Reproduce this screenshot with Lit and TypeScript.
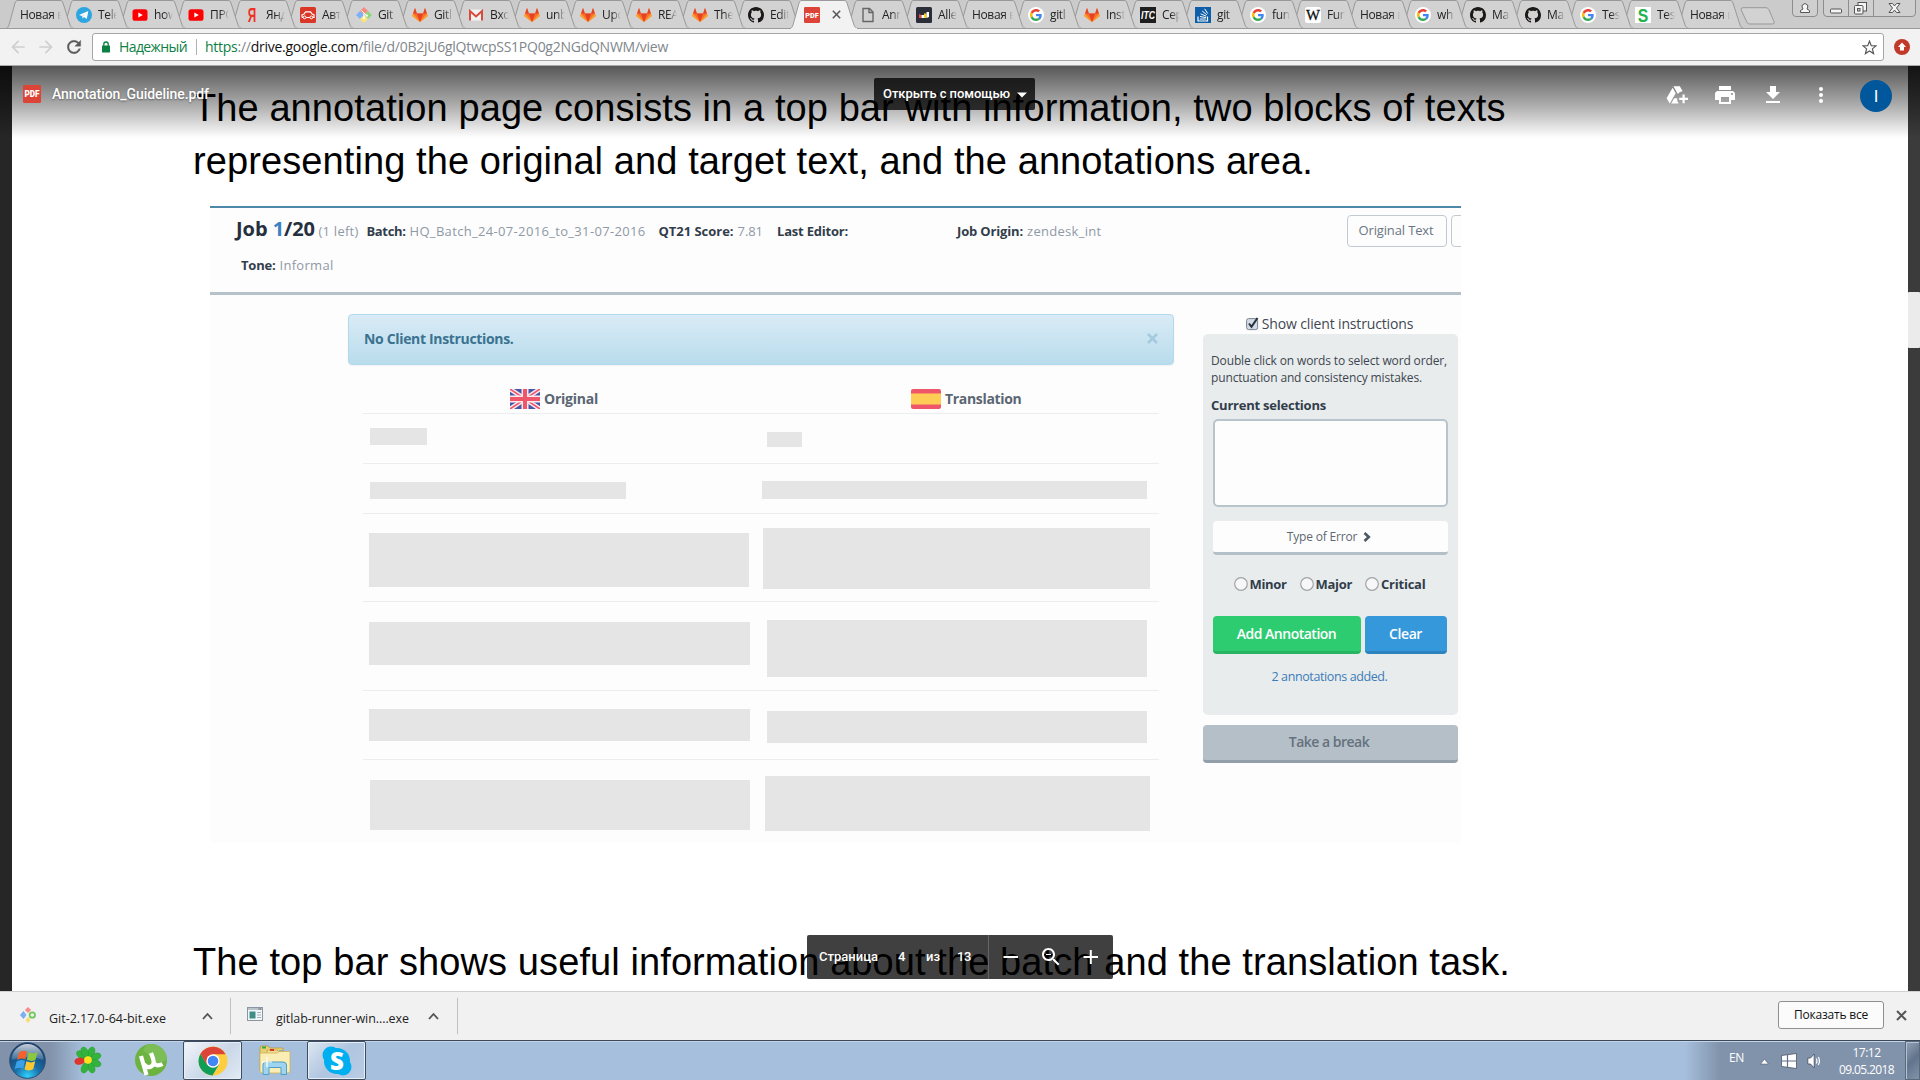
import { LitElement, html, svg, css } from "lit";
import { customElement, property } from "lit/decorators.js";
import { classMap } from "lit/directives/class-map.js";
import { styleMap } from "lit/directives/style-map.js";

/* A line of text tracked so that it fills a given width. */
@customElement("fit-text")
class FitText extends LitElement {
  @property({ type: Number }) w = 0;
  static styles = css`
    :host { display: inline-block; white-space: pre; flex: none; }
    .run { display: inline-block; }
  `;
  updated() {
    const run = this.renderRoot.querySelector(".run") as HTMLElement;
    run.style.letterSpacing = "0px";
    const count = (this.textContent || "").trim().length || 1;
    const gap = (this.w - run.getBoundingClientRect().width) / count;
    run.style.letterSpacing = gap.toFixed(3) + "px";
    this.style.width = this.w + "px";
  }
  render() {
    return html`<span class="run"><slot></slot></span>`;
  }
}

const icon = (w: number, h: number, box: string, body: unknown) =>
  html`<svg width=${w} height=${h} viewBox=${box} style="display:block;flex:none">${body}</svg>`;

const octocat =
  "M8 0C3.58 0 0 3.58 0 8c0 3.54 2.29 6.53 5.47 7.59.4.07.55-.17.55-.38 0-.19-.01-.82-.01-1.49-2.01.37-2.53-.49-2.69-.94-.09-.23-.48-.94-.82-1.13-.28-.15-.68-.52-.01-.53.63-.01 1.08.58 1.23.82.72 1.21 1.87.87 2.33.66.07-.52.28-.87.51-1.07-1.78-.2-3.64-.89-3.64-3.95 0-.87.31-1.59.82-2.15-.08-.2-.36-1.02.08-2.12 0 0 .67-.21 2.2.82.64-.18 1.32-.27 2-.27.68 0 1.36.09 2 .27 1.53-1.04 2.2-.82 2.2-.82.44 1.1.16 1.92.08 2.12.51.56.82 1.27.82 2.15 0 3.07-1.87 3.75-3.65 3.95.29.25.54.73.54 1.48 0 1.07-.01 1.93-.01 2.2 0 .21.15.46.55.38A8.013 8.013 0 0016 8c0-4.42-3.58-8-8-8z";

const fav: Record<string, unknown> = {
  telegram: svg`<circle cx="8" cy="8" r="8" fill="#2ca5e0"/><path d="M3 8 L12.3 4 L10.8 12 L8 10 L6.6 11.5 L6.2 9Z" fill="#fff"/><path d="M6.2 9 L10.3 5.8 L7.2 9.6 L6.6 11.5Z" fill="#c8daea"/>`,
  youtube: svg`<rect x="0.5" y="2.2" width="15" height="11.6" rx="2.6" fill="#f00"/><path d="M6.3 5.4 L10.8 8 L6.3 10.6Z" fill="#fff"/>`,
  yandex: svg`<text x="8" y="15" font-family="Liberation Sans" font-size="20" textLength="8.5" lengthAdjust="spacingAndGlyphs" font-weight="bold" text-anchor="middle" fill="#ef3124">Я</text>`,
  car: svg`<rect width="16" height="16" rx="1.5" fill="#db3727"/><path d="M2 10.5 V7.8 L4 7 L5.6 4.8 H10.5 L12.2 7 L14 7.8 V10.5 H12.8 M9.8 10.5 H6.2 M3.2 10.5 H2" fill="none" stroke="#fff" stroke-width="1.2"/><circle cx="4.6" cy="10.4" r="1.4" fill="none" stroke="#fff"/><circle cx="11.3" cy="10.4" r="1.4" fill="none" stroke="#fff"/>`,
  git: svg`<path d="M8 0 L12 4 L8 8 L4 4Z" fill="#f98a7e"/><path d="M4 4 L8 8 L4 12 L0 8Z" fill="#7cb0f8"/><path d="M12 4 L16 8 L12 12 L8 8Z" fill="#8fd67a"/><path d="M8 8 L12 12 L8 16 L4 12Z" fill="#fbe377"/><path d="M5.5 3.5 L8 6 V11 M8 6 L10.5 8.5" stroke="#fff" stroke-width="1" fill="none"/><circle cx="8" cy="11" r="1.2" fill="#fff"/><circle cx="10.8" cy="8.6" r="1.2" fill="#fff"/>`,
  gitlab: svg`<path d="M8 15 L0.3 9 L2 3.6 L3 1 L4.9 6.4 H11.1 L13 1 L14 3.6 L15.7 9Z" fill="#fc6d26"/><path d="M8 15 L4.9 6.4 H11.1Z" fill="#e24329"/><path d="M0.3 9 L1.2 6.4 L8 15Z M15.7 9 L14.8 6.4 L8 15Z" fill="#fca326"/><path d="M3 1 L4.9 6.4 H1.2Z M13 1 L11.1 6.4 H14.8Z" fill="#e24329"/>`,
  gmail: svg`<rect x="1" y="2.5" width="14" height="11" rx="1" fill="#f2f2f2"/><path d="M2 13.5 V4 L8 9.5 L14 4 V13.5" fill="none" stroke="#d54b3d" stroke-width="2"/>`,
  github: svg`<path d=${octocat} fill="#1b1817"/>`,
  pdf: svg`<rect width="16" height="16" rx="1.2" fill="#db4437"/><text x="8" y="11" font-family="Roboto" font-weight="900" font-size="7.5" text-anchor="middle" textLength="13.4" lengthAdjust="spacingAndGlyphs" fill="#fff">PDF</text>`,
  file: svg`<path d="M3 1.5 H9.5 L13 5 V14.5 H3Z M9 1.5 V5.5 H13" fill="none" stroke="#666" stroke-width="1.4"/>`,
  allegro: svg`<rect width="16" height="16" rx="1.5" fill="#2b2d39"/><path d="M3 7 L5.500 8 V11 H3Z" fill="#ef4a4a"/><path d="M5.500 8 H8 V11 H5.5Z" fill="#fff"/><path d="M8 6.500 H10.5 V11 H8Z" fill="#f7d423"/><path d="M10.5 5 L13 5 V10 L10.5 11Z" fill="#fff"/>`,
  google: svg`<circle cx="8" cy="8" r="8" fill="#fff"/><g transform="translate(2 2) scale(.25)"><path fill="#EA4335" d="M24 9.5c3.54 0 6.71 1.22 9.21 3.6l6.85-6.85C35.9 2.38 30.47 0 24 0 14.62 0 6.51 5.38 2.56 13.22l7.98 6.19C12.43 13.72 17.74 9.5 24 9.5z"/><path fill="#4285F4" d="M46.98 24.55c0-1.57-.15-3.09-.38-4.55H24v9.02h12.94c-.58 2.96-2.26 5.48-4.78 7.18l7.73 6c4.51-4.18 7.09-10.36 7.09-17.65z"/><path fill="#FBBC05" d="M10.53 28.59c-.48-1.45-.76-2.99-.76-4.59s.27-3.14.76-4.59l-7.98-6.19C.92 16.46 0 20.12 0 24c0 3.88.92 7.54 2.56 10.78l7.97-6.19z"/><path fill="#34A853" d="M24 48c6.48 0 11.93-2.13 15.89-5.81l-7.73-6c-2.15 1.45-4.92 2.3-8.16 2.3-6.26 0-11.57-4.22-13.47-9.91l-7.98 6.19C6.51 42.62 14.62 48 24 48z"/></g>`,
  itc: svg`<rect width="16" height="16" fill="#1e1e1e"/><text x="8" y="11.8" font-family="Liberation Sans" font-weight="bold" font-style="italic" font-size="10.5" text-anchor="middle" textLength="14" lengthAdjust="spacingAndGlyphs" fill="#fff">ITC</text>`,
  stack: svg`<rect width="16" height="16" fill="#0f5ea8"/><path d="M3 9.5 V14 H12.5 V9.5" fill="none" stroke="#fff" stroke-width="1.2"/><path d="M4.8 12 H10.8 M5 9.5 L11 10.6 M5.6 6.8 L11.2 9.2 M7.2 4 L11.8 7.8 M9.6 1.8 L12.8 6.6" stroke="#fff" stroke-width="1"/>`,
  wiki: svg`<rect width="16" height="16" rx="2.5" fill="#fff"/><text x="8" y="13" font-family="Liberation Serif" font-size="15" text-anchor="middle" textLength="14" lengthAdjust="spacingAndGlyphs" fill="#111" stroke="#111" stroke-width=".3">W</text>`,
  s: svg`<rect width="16" height="16" fill="#fff"/><text x="8" y="14.5" font-family="Liberation Sans" font-weight="bold" font-size="18.5" text-anchor="middle" textLength="10.5" lengthAdjust="spacingAndGlyphs" fill="#22b14c">S</text>`,
};

type Tab = [string, string];
const tabs: Tab[] = [
  ["", "Новая в"], ["telegram", "Tele"], ["youtube", "how"], ["youtube", "ПРО"], ["yandex", "Янд"],
  ["car", "Авт"], ["git", "Git"], ["gitlab", "Gitl"], ["gmail", "Вхо"], ["gitlab", "unb"],
  ["gitlab", "Upd"], ["gitlab", "REA"], ["gitlab", "The"], ["github", "Edit"], ["pdf", ""],
  ["file", "Ann"], ["allegro", "Alle"], ["", "Новая в"], ["google", "gitl"], ["gitlab", "Inst"],
  ["itc", "Сер"], ["stack", "git"], ["google", "fun"], ["wiki", "Fun"], ["", "Новая в"],
  ["google", "wh"], ["github", "Ma"], ["github", "Ma"], ["google", "Tes"], ["s", "Tes"], ["", "Новая в"],
];

@customElement("browser-tabs")
class BrowserTabs extends LitElement {
  static styles = css`
    :host { display: flex; height: 29px; background: #cbcbcb; padding-left: 6px; box-sizing: border-box;
      border-bottom: 1px solid #9b9b9b; font: 12px/16px "Open Sans", "Noto Sans", sans-serif; color: #222; }
    .tab { position: relative; flex: none; width: 56px; height: 28px; }
    .tab.narrow { width: 55px; }
    .shape { position: absolute; left: 0; top: 0; }
    .content { position: relative; display: flex; gap: 6px; padding: 7px 0 0 14px; height: 17px; }
    .label { flex: 1; min-width: 0; margin-right: 1px; overflow: hidden; white-space: nowrap; letter-spacing: -.35px;
      -webkit-mask-image: linear-gradient(90deg, #000 calc(100% - 9px), transparent); }
    .close { margin-left: 6px; padding-top: 3px; }
    .add { margin: 7px 0 0 9px; }
    .user { margin: -1px 0 0 16px; }
    .controls { margin: -1px 0 0 5px; }
  `;
  render() {
    return html`
      ${tabs.map(([name, text], i) => {
        const active = name === "pdf";
        return html`
          <div class=${classMap({ tab: true, narrow: i > 19 })} style=${styleMap({ zIndex: String(active ? 60 : 50 - i) })}>
            <svg class="shape" width="70" height="29" viewBox="0 0 70 29">
              <path d="M0 28.5 C2 28 2 27 3 25 L9 3 C10 1 10 .5 12 .5 H54 C56 .5 56.5 1.5 57 3 L64 25 C65 27.5 66 28 68 28.5"
                fill=${active ? "#f2f2f2" : "#d2d2d2"} stroke=${active ? "#9b9b9b" : "#999"}></path>
              ${active ? svg`<path d="M1 28.5 H67" stroke="#f2f2f2"/>` : svg`<path d="M0 28.5 H70" stroke="#9b9b9b"/>`}
            </svg>
            <div class="content">
              ${name ? icon(16, 16, "0 0 16 16", fav[name]) : ""}
              ${active
                ? html`<div class="close">${icon(9, 9, "0 0 9 9", svg`<path d="M.8 .8 L8.2 8.2 M8.2 .8 L.8 8.2" stroke="#555" stroke-width="1.5"/>`)}</div>`
                : html`<span class="label">${text}</span>`}
            </div>
          </div>`;
      })}
      <div class="add">${icon(36, 18, "0 0 36 18", svg`<path d="M3 .7 H26 Q28 .7 28.8 2.5 L34 14.5 Q34.8 17 32.5 17 H9.5 Q7.5 17 6.8 15 L1.2 3 Q.5 .7 3 .7Z" fill="#d2d2d2" stroke="#999"/>`)}</div>
      <div class="user">${icon(26, 18, "0 0 26 18", svg`<path d="M.5 0 V14 Q.5 17.5 4 17.5 H22 Q25.500 17.5 25.500 14 V0" fill="#cfcfcf" stroke="#8d8d8d"/><path d="M8.500 13.500 V11.500 L11 10 Q9.500 8 10.300 6 Q13 3 15.600 6 Q16.300 8 15 10 L17.500 11.500 V13.500Z" fill="#f5f5f5" stroke="#555"/>`)}</div>
      <div class="controls">${icon(93, 18, "0 0 93 18", svg`<path d="M.5 0 V14 Q.5 17.5 4 17.5 H89 Q92.500 17.5 92.500 14 V0 M25.500 0 V17.500 M50.500 0 V17.500" fill="#cfcfcf" stroke="#8d8d8d"/>
        <rect x="7.500" y="10" width="11" height="4" rx="1" fill="#f5f5f5" stroke="#555"/>
        <rect x="35" y="3.500" width="8.500" height="8.500" fill="#f5f5f5" stroke="#555"/><rect x="31.500" y="6.500" width="8.500" height="8.500" rx="1" fill="#f5f5f5" stroke="#555"/><rect x="34.500" y="9.500" width="2.500" height="2.500" fill="#cfcfcf" stroke="#555"/>
        <path d="M66 4.500 H69.500 L71.500 7 L73.500 4.500 H77 L73.500 9 L77 13.500 H73.500 L71.500 11 L69.500 13.500 H66 L69.500 9Z" fill="#f5f5f5" stroke="#555"/>`)}</div>
    `;
  }
}

@customElement("address-bar")
class AddressBar extends LitElement {
  static styles = css`
    :host { display: flex; align-items: center; height: 37px; box-sizing: border-box; background: #f2f2f2; padding: 0 10px 0 8px;
      border-bottom: 1px solid #a9a9a9; font: 14px/20px "Open Sans", "Noto Sans", sans-serif; }
    .nav { display: flex; gap: 8px; align-items: center; width: 84px; }
    .box { flex: 1; display: flex; align-items: center; height: 28px; box-sizing: border-box; border: 1px solid #a5a5a5; border-radius: 3px; background: #fff; padding: 0 6px 0 8px; }
    .secure { color: #0b8043; margin-left: 8px; }
    .bar { width: 1px; height: 16px; background: #b0b0b0; margin: 0 8px 0 9px; }
    .url { color: #80868b; }
    .https { color: #0b8043; }
    .host { color: #111; }
    .star { margin-left: auto; }
    .ext { margin-left: 10px; }
  `;
  render() {
    return html`
      <div class="nav">
        ${icon(20, 20, "0 0 24 24", svg`<path fill="#cfcfcf" d="M20 11H7.830l5.590-5.590L12 4l-8 8 8 8 1.410-1.410L7.830 13H20v-2z"/>`)}
        ${icon(20, 20, "0 0 24 24", svg`<path fill="#cfcfcf" d="M12 4l-1.410 1.410L16.170 11H4v2h12.170l-5.580 5.590L12 20l8-8z"/>`)}
        ${icon(20, 20, "0 0 24 24", svg`<path fill="#5a5a5a" stroke="#5a5a5a" stroke-width=".4" d="M17.650 6.350C16.200 4.900 14.210 4 12 4c-4.420 0-7.990 3.580-7.990 8s3.570 8 7.990 8c3.730 0 6.840-2.550 7.730-6h-2.080c-.820 2.330-3.040 4-5.650 4-3.310 0-6-2.690-6-6s2.690-6 6-6c1.660 0 3.140.690 4.220 1.780L13 11h7V4l-2.350 2.350z"/>`)}
      </div>
      <div class="box">
        ${icon(10, 12, "0 0 10 12", svg`<rect x="1" y="4.500" width="8" height="7" rx=".6" fill="#0b8043"/><path d="M2.800 5 V3.200 Q2.800 1 5 1 Q7.200 1 7.200 3.200 V5" fill="none" stroke="#0b8043" stroke-width="1.300"/>`)}
        <fit-text class="secure" w="68">Надежный</fit-text>
        <span class="bar"></span>
        <fit-text class="url" w="463"><span class="https">https</span>://<span class="host">drive.google.com</span>/file/d/0B2jU6glQtwcpSS1PQ0g2NGdQNWM/view</fit-text>
        <span class="star">${icon(15, 15, "0 0 15 15", svg`<path d="M7.500 1.200 L9.300 5.700 L14 5.900 L10.400 8.900 L11.600 13.600 L7.500 11 L3.400 13.600 L4.600 8.900 L1 5.900 L5.700 5.700Z" fill="none" stroke="#5a5a5a" stroke-width="1.200"/>`)}</span>
      </div>
      <span class="ext">${icon(16, 16, "0 0 16 16", svg`<circle cx="8" cy="8" r="8" fill="#c0392b"/><path d="M8 3.500 L12 8 H10 V11.500 H6 V8 H4Z" fill="#fff"/>`)}</span>
    `;
  }
}

/* [left margin, top margin, width, height] of a placeholder block */
type Block = [number, number, number, number];
const rows: { h: number; a: Block; b: Block }[] = [
  { h: 50, a: [7, 14, 57, 17], b: [340, 18, 35, 15] },
  { h: 50, a: [7, 18, 256, 17], b: [136, 17, 385, 18] },
  { h: 88, a: [6, 19, 380, 54], b: [14, 14, 387, 61] },
  { h: 89, a: [6, 20, 381, 43], b: [17, 18, 380, 57] },
  { h: 69, a: [6, 18, 381, 32], b: [17, 20, 380, 32] },
  { h: 85, a: [7, 20, 380, 50], b: [15, 16, 385, 55] },
];
const block = ([x, y, w, h]: Block) =>
  html`<div class="block" style=${styleMap({ margin: `${y}px 0 0 ${x}px`, width: w + "px", height: h + "px" })}></div>`;

@customElement("annotation-page")
class AnnotationPage extends LitElement {
  static styles = css`
    :host { display: block; width: 1251px; height: 637px; box-sizing: border-box; overflow: hidden; background: #fdfdfd; border-top: 2px solid #4d88a8;
      font: 13px/24px "Open Sans", "Noto Sans", sans-serif; color: #8f99a6; }
    .bold { font-weight: 700; color: #323d4b; }
    .head { height: 87px; box-sizing: border-box; border-bottom: 3px solid #b6c2c9; padding: 9px 0 0 26px; }
    .line { display: flex; align-items: baseline; height: 24px; }
    .job { font-size: 20px; color: #262f3e; font-weight: 700; }
    .job span { color: #3b82c4; }
    .left { margin-left: 3.500px; }
    .g1 { margin-left: 8px; } .g2 { margin-left: 4px; } .g3 { margin-left: 13px; } .g4 { margin-left: 14px; } .g5 { margin-left: 109px; }
    .btn { align-self: flex-start; box-sizing: border-box; height: 32px; margin-top: -2px; padding: 2px 0 0 11px; border: 1px solid #c0cad0; border-radius: 4px; flex: none; color: #6a7683; }
    .b1 { width: 100px; margin-left: 245px; } .b2 { width: 30px; margin-left: 4px; }
    .tone { margin: 12px 0 0 5px; }
    .body { display: flex; }
    .main { width: 826px; margin: 19px 0 0 138px; }
    .alert { display: flex; align-items: center; justify-content: space-between; height: 51px; box-sizing: border-box; padding: 0 15px 1px; border: 1px solid #b3daec; border-radius: 4px;
      background: linear-gradient(#d9ebf6, #b9dcec); font-size: 14px; font-weight: 700; color: #3a7290; box-shadow: 0 1px 2px rgba(0,0,0,.05); }
    .alert svg { margin-bottom: 2px; }
    .cols { display: flex; height: 48px; box-sizing: border-box; padding-top: 24px; font-size: 14px; line-height: 19px; font-weight: 700; color: #5a6673; }
    .cols svg { margin-right: 4px; }
    .o { display: flex; padding-left: 162px; width: 239px; }
    .t { display: flex; padding-left: 162px; }
    .table { margin: 0 15px 0 15px; }
    .row { display: flex; align-items: flex-start; box-sizing: border-box; border-top: 1px solid #ebeeee; }
    .block { flex: none; background: #e5e5e5; }
    .side { width: 255px; margin: 15px 0 0 28.500px; }
    .show { display: flex; align-items: center; justify-content: center; gap: 3px; height: 24px; padding-top: 3px; box-sizing: border-box; font-size: 14px; color: #3f4752; margin-left: -1px; }
    .panel { box-sizing: border-box; height: 381px; border-radius: 5px; background: #e8ecec; padding: 19px 10px 0 9px; color: #3d4650; }
    .hint { font-size: 12px; line-height: 16.500px; display: flex; flex-direction: column; margin-left: -.5px; }
    .cur { display: block; line-height: 20px; margin-top: 9px; margin-left: -.5px; }
    .area { height: 88px; box-sizing: border-box; margin: 4px 0 0 1px; border: 2px solid #b8c4cb; border-radius: 5px; background: #fdfdfd; }
    .type { display: flex; justify-content: center; align-items: center; gap: 6px; height: 34px; box-sizing: border-box; margin: 14px 0 0 1px; padding-right: 2px; border-bottom: 3px solid #b4c0c7; border-radius: 4px; background: #fdfdfd; font-size: 12px; color: #5d6873; }
    .radios { display: flex; align-items: center; height: 24px; margin: 17px 0 0 22px; }
    .radios svg { margin-right: 2px; }
    .r2, .r3 { display: flex; align-items: center; margin-left: 13px; }
    .actions { display: flex; gap: 4px; margin: 20px 0 0 1px; }
    .act { height: 38px; box-sizing: border-box; border-radius: 4px; text-align: center; font-size: 14px; font-weight: 600; color: #fff; padding-top: 5px; line-height: 25px; }
    .add { width: 148px; background: #2ecc71; border-bottom: 3px solid #27b463; }
    .clear { width: 82px; background: #3498db; border-bottom: 3px solid #2c83bd; }
    .added { text-align: center; margin-top: 11px; font-size: 12.500px; color: #3b7cba; }
    .break { height: 38px; box-sizing: border-box; margin-top: 10px; background: #b4bfc7; border-bottom: 3px solid #929faa; border-radius: 4px; text-align: center; font-size: 14px; line-height: 33px; color: #65717d; padding-right: 2px; font-weight: 600; }
  `;
  radio() {
    return icon(14, 14, "0 0 14 14", svg`<circle cx="7" cy="7" r="6.300" fill="#f7f7f7" stroke="#a0a4a8" stroke-width="1.200"/>`);
  }
  render() {
    return html`
      <div class="head">
        <div class="line">
          <fit-text class="job" w="79">Job <span>1</span>/20</fit-text>
          <fit-text class="left" w="40">(1 left)</fit-text>
          <fit-text class="bold g1" w="39">Batch:</fit-text>
          <fit-text class="g2" w="236">HQ_Batch_24-07-2016_to_31-07-2016</fit-text>
          <fit-text class="bold g3" w="75">QT21 Score:</fit-text>
          <fit-text class="g2" w="25.500">7.81</fit-text>
          <fit-text class="bold g4" w="71">Last Editor:</fit-text>
          <fit-text class="bold g5" w="66">Job Origin:</fit-text>
          <fit-text class="g2" w="74.500">zendesk_int</fit-text>
          <div class="btn b1"><fit-text w="75">Original Text</fit-text></div>
          <div class="btn b2"></div>
        </div>
        <div class="line tone"><fit-text class="bold" w="34.500">Tone:</fit-text><fit-text class="g2" w="54">Informal</fit-text></div>
      </div>
      <div class="body">
        <div class="main">
          <div class="alert">
            <fit-text w="149.500">No Client Instructions.</fit-text>
            ${icon(11, 11, "0 0 11 11", svg`<path d="M1 1 L10 10 M10 1 L1 10" stroke="#a3cadd" stroke-width="2.600"/>`)}
          </div>
          <div class="cols">
            <div class="o">
              ${icon(30, 20, "0 0 30 20", svg`<rect width="30" height="20" rx="2" fill="#4757a5"/><path d="M0 0 L30 20 M30 0 L0 20" stroke="#fbe9ee" stroke-width="4.500"/><path d="M0 0 L30 20 M30 0 L0 20" stroke="#f0566a" stroke-width="1.600"/><path d="M15 0 V20 M0 10 H30" stroke="#fbe9ee" stroke-width="7"/><path d="M15 0 V20 M0 10 H30" stroke="#f0566a" stroke-width="4"/>`)}
              <fit-text w="54">Original</fit-text>
            </div>
            <div class="t">
              ${icon(30, 20, "0 0 30 20", svg`<rect width="30" height="20" rx="2" fill="#f0566a"/><rect y="4.500" width="30" height="11" fill="#ffcd55"/>`)}
              <fit-text w="76.500">Translation</fit-text>
            </div>
          </div>
          <div class="table">
            ${rows.map((r) => html`<div class="row" style=${styleMap({ height: r.h + "px" })}>${block(r.a)}${block(r.b)}</div>`)}
          </div>
        </div>
        <div class="side">
          <div class="show">
            ${icon(13, 14, "0 0 13 14", svg`<rect x=".600" y="1.600" width="11" height="11" rx="2" fill="#d3dbe6" stroke="#7d848f"/><path d="M3 6.500 L5.500 9.800 L11.500 1" fill="none" stroke="#27303a" stroke-width="2"/>`)}
            <fit-text w="151.500">Show client instructions</fit-text>
          </div>
          <div class="panel">
            <div class="hint">
              <fit-text w="236">Double click on words to select word order,</fit-text>
              <fit-text w="211">punctuation and consistency mistakes.</fit-text>
            </div>
            <fit-text class="bold cur" w="115">Current selections</fit-text>
            <div class="area"></div>
            <div class="type"><fit-text w="70.500">Type of Error</fit-text>${icon(8, 10, "0 0 8 10", svg`<path d="M1.500 1 L5.800 5 L1.500 9" fill="none" stroke="#4d5862" stroke-width="2.600"/>`)}</div>
            <div class="radios">
              ${this.radio()}<fit-text class="bold" w="37">Minor</fit-text>
              <div class="r2">${this.radio()}<fit-text class="bold" w="36.500">Major</fit-text></div>
              <div class="r3">${this.radio()}<fit-text class="bold" w="44.500">Critical</fit-text></div>
            </div>
            <div class="actions">
              <div class="act add"><fit-text w="99.500">Add Annotation</fit-text></div>
              <div class="act clear"><fit-text w="33">Clear</fit-text></div>
            </div>
            <div class="added"><fit-text w="116">2 annotations added.</fit-text></div>
          </div>
          <div class="break"><fit-text w="80.500">Take a break</fit-text></div>
        </div>
      </div>
    `;
  }
}

@customElement("pdf-viewer")
class PdfViewer extends LitElement {
  static styles = css`
    :host { display: flex; position: relative; height: 925px; overflow: hidden; background: #fff; font: 500 14px/20px Roboto, sans-serif; color: #fff; }
    .edge { width: 12px; background: #262626; flex: none; }
    .track { width: 12px; background: #3b3b3b; flex: none; padding-top: 226px; box-sizing: border-box; }
    .thumb { height: 56px; background: #ebebeb; border-radius: 1px; }
    .page { flex: 1; padding: 16px 0 0 181px; color: #000; font: 38px/53px "Liberation Sans", Arial, sans-serif; }
    .page fit-text { display: block; }
    .shot { margin: 18px 0 0 17px; }
    .last { margin-top: 93px; }
    .top { position: absolute; left: 0; right: 0; top: 0; height: 72px; box-sizing: border-box; display: flex; align-items: flex-start; padding: 12px 28px 0 23px;
      background: linear-gradient(rgba(0,0,0,.66), rgba(0,0,0,.32) 55%, rgba(0,0,0,0)); }
    .pdf { margin-top: 7px; }
    .name { margin: 6px 0 0 11px; text-shadow: 0 1px 2px rgba(0,0,0,.4); }
    .open { margin-left: 665px; width: 161px; height: 32px; box-sizing: border-box; display: flex; align-items: center; gap: 7px; padding-left: 9px; border-radius: 2px; background: rgba(0,0,0,.77); font-size: 13px; }
    .open svg { margin-top: 2px; }
    .tools { display: flex; align-items: center; gap: 24px; margin: 5px 27px 0 auto; }
    .avatar { width: 32px; height: 32px; margin-top: 2px; border-radius: 50%; background: #01579b; text-align: center; font: 17px/32px Roboto, sans-serif; }
    .pager { position: absolute; left: 807px; top: 869px; width: 306px; height: 44px; display: flex; align-items: center; border-radius: 2px; background: rgba(0,0,0,.75); font-size: 13px; }
    .p1 { margin-left: 12px; } .p2 { margin-left: 20px; } .p3 { margin-left: 20px; } .p4 { margin-left: 17px; }
    .sep { width: 1px; height: 44px; background: #666; margin: 0 10px 0 17px; }
    .zoom { display: flex; gap: 16px; align-items: center; }
  `;
  render() {
    return html`
      <div class="edge"></div>
      <div class="page">
        <fit-text w="1312.500">The annotation page consists in a top bar with information, two blocks of texts</fit-text>
        <fit-text w="1120">representing the original and target text, and the annotations area.</fit-text>
        <annotation-page class="shot"></annotation-page>
        <fit-text class="last" w="1317">The top bar shows useful information about the batch and the translation task.</fit-text>
      </div>
      <div class="track"><div class="thumb"></div></div>
      <div class="top">
        <span class="pdf">${icon(18, 18, "0 0 16 16", fav.pdf)}</span>
        <fit-text class="name" w="157">Annotation_Guideline.pdf</fit-text>
        <div class="open"><fit-text w="127">Открыть с помощью</fit-text>${icon(10, 6, "0 0 10 6", svg`<path d="M0 .500 H10 L5 5.500Z" fill="#fff"/>`)}</div>
        <div class="tools">
          ${icon(24, 24, "0 0 24 24", svg`<path fill="#fff" d="M8.200 3.200 H14.800 L17.600 8.200 A6.500 6.500 0 0 0 12.800 10.900 L8.700 3.800Z M7.600 4.800 L10.700 10.200 L4.700 20.500 L1.600 15.200Z M9.200 15.200 H12.200 A6.500 6.500 0 0 0 13.600 20.500 H6.200Z"/><path fill="#fff" d="M17.500 11.500h2.200v3.300h3.300v2.200h-3.300v3.300h-2.200v-3.300h-3.300v-2.200h3.300z"/>`)}
          ${icon(24, 24, "0 0 24 24", svg`<path fill="#fff" d="M19 8H5c-1.660 0-3 1.340-3 3v6h4v4h12v-4h4v-6c0-1.660-1.340-3-3-3zm-3 11H8v-5h8v5zm3-7c-.550 0-1-.450-1-1s.450-1 1-1 1 .450 1 1-.450 1-1 1zm-1-9H6v4h12V3z"/>`)}
          ${icon(24, 24, "0 0 24 24", svg`<path fill="#fff" d="M19 9h-4V3H9v6H5l7 7 7-7zM5 18v2h14v-2H5z"/>`)}
          ${icon(24, 24, "0 0 24 24", svg`<circle cx="12" cy="6" r="2" fill="#fff"/><circle cx="12" cy="12" r="2" fill="#fff"/><circle cx="12" cy="18" r="2" fill="#fff"/>`)}
        </div>
        <div class="avatar">I</div>
      </div>
      <div class="pager">
        <fit-text class="p1" w="59">Страница</fit-text><fit-text class="p2" w="8">4</fit-text><fit-text class="p3" w="14">из</fit-text><fit-text class="p4" w="14">13</fit-text>
        <span class="sep"></span>
        <div class="zoom">
          ${icon(24, 24, "0 0 24 24", svg`<path d="M4.500 12 H19" stroke="#fff" stroke-width="2"/>`)}
          ${icon(24, 24, "0 0 24 24", svg`<path fill="#fff" d="M15.500 14h-.790l-.280-.270C15.410 12.590 16 11.110 16 9.500 16 5.910 13.090 3 9.500 3S3 5.910 3 9.500 5.910 16 9.500 16c1.610 0 3.090-.590 4.230-1.570l.270.280v.790l5 4.990L20.490 19l-4.990-5zm-6 0C7.010 14 5 11.990 5 9.500S7.010 5 9.500 5 14 7.010 14 9.500 11.990 14 9.500 14zM7 9h5v1H7z"/>`)}
          ${icon(24, 24, "0 0 24 24", svg`<path d="M4.500 12 H19 M11.800 5 V19" stroke="#fff" stroke-width="2"/>`)}
        </div>
      </div>
    `;
  }
}

@customElement("download-shelf")
class DownloadShelf extends LitElement {
  static styles = css`
    :host { display: flex; height: 49px; box-sizing: border-box; border-top: 1px solid #d0d0d0; background: #f1f1f1; font: 13px/18px "Open Sans", "Noto Sans", sans-serif; color: #222; }
    .item { display: flex; align-items: flex-start; box-sizing: border-box; height: 36px; margin-top: 6px; border-right: 1px solid #c0c0c0; }
    .one { width: 231px; padding-left: 20px; }
    .two { width: 227px; padding-left: 16px; }
    .pic { margin-top: 9px; width: 16px; }
    .file { margin: 12px 0 0 13px; font-size: 12.500px; }
    .up { margin: 14px 17px 0 auto; }
    .two .up { margin-right: 18px; }
    .all { margin: 9px 0 0 auto; width: 106px; height: 28px; box-sizing: border-box; border: 1px solid #8f8f8f; border-radius: 3px; background: #fbfbfb; text-align: center; font-size: 12px; line-height: 25px; color: #111; }
    .close { margin: 18px 13px 0 12px; }
  `;
  chevron() {
    return icon(11, 8, "0 0 11 8", svg`<path d="M1 7 L5.500 2 L10 7" fill="none" stroke="#555" stroke-width="1.800"/>`);
  }
  render() {
    return html`
      <div class="item one">
        <span class="pic">${icon(16, 16, "0 0 16 16", svg`<path d="M8 .500 L10.500 3 L8 5.500 L5.500 3Z" fill="#f58b83" stroke="#f58b83"/><path d="M3.500 4.500 L6 8 L3.500 11.500 L.500 8Z" fill="#7caef2" stroke="#7caef2"/><circle cx="12.300" cy="8" r="2.700" fill="none" stroke="#6fc85c" stroke-width="1.800"/><path d="M8 10.500 L10 13 L8 15.500 L6 13Z" fill="#f6dc6f" stroke="#f6dc6f"/>`)}</span>
        <fit-text class="file" w="117">Git-2.17.0-64-bit.exe</fit-text><span class="up">${this.chevron()}</span>
      </div>
      <div class="item two">
        <span class="pic">${icon(16, 14, "0 0 16 14", svg`<rect x=".500" y=".500" width="15" height="13" fill="#f3f6f8" stroke="#8b96a0"/><path d="M1 2 H15" stroke="#b9c3cb" stroke-width="2"/><rect x="2.500" y="4.500" width="6" height="7" fill="#3f8e86"/><path d="M10 5.500 H14 M10 8 H14 M10 10.500 H14" stroke="#a8b2ba"/><path d="M11.500 2 H14.500" stroke="#445" stroke-dasharray="1 .600"/>`)}</span>
        <fit-text class="file" w="133">gitlab-runner-win....exe</fit-text><span class="up">${this.chevron()}</span>
      </div>
      <div class="all"><fit-text w="74">Показать все</fit-text></div>
      <span class="close">${icon(11, 11, "0 0 11 11", svg`<path d="M1 1 L10 10 M10 1 L1 10" stroke="#555" stroke-width="2"/>`)}</span>
    `;
  }
}

@customElement("task-bar")
class TaskBar extends LitElement {
  static styles = css`
    :host { display: flex; align-items: center; height: 40px; box-sizing: border-box; border-top: 1px solid #3c4757; box-shadow: inset 0 1px #c3d5e9;
      background: linear-gradient(90deg, #8192aa 0, #8192aa 50px, #a6bfdc 84px, #a6bfdc 1685px, #8193ab 1720px, #8193ab 100%);
      font: 12px/17px "Open Sans", "Noto Sans", sans-serif; color: #fff; }
    .orb { margin-left: 9px; } .icq { margin-left: 28px; } .ut { margin-left: 33px; }
    .open { width: 59px; height: 39px; box-sizing: border-box; border: 1px solid #3f4d60; border-radius: 2px; display: flex; align-items: center; justify-content: center; box-shadow: inset 0 0 0 1px #e6eef7; }
    .chrome { margin-left: 16px; background: linear-gradient(135deg, #f3f6fa, #c9d7e8 55%, #e2eaf4); }
    .folder { margin: 0 16px 0 17px; }
    .skype { background: linear-gradient(135deg, #dde7f2, #b0c5df 50%, #b9cce4); }
    .orb, .icq, .ut, .folder { margin-bottom: 1px; }
    .tray { display: flex; align-items: center; margin-left: auto; height: 39px; }
    .lang { margin: 0 16px 6px 0; }
    .arrow { margin: 2px 12px 0 0; } .win { margin: 1px 10px 0 0; } .vol { margin: 1px 18px 0 0; }
    .clock { display: flex; flex-direction: column; align-items: center; margin-right: 11px; }
    .desk { width: 15px; height: 39px; box-sizing: border-box; border: 1px solid #5a697c; box-shadow: inset 1px 1px #b3c2d4; background: linear-gradient(135deg, #93a4b9, #62748b 50%, #8294aa); }
  `;
  render() {
    const petals = [0, 45, 90, 135, 180, 270, 315, 240];
    return html`
      <span class="orb">${icon(37, 37, "0 0 37 37", svg`
        <defs><radialGradient id="o" cx=".5" cy=".95" r=".9"><stop offset="0" stop-color="#2fd3ff"/><stop offset=".4" stop-color="#1a6ea8"/><stop offset="1" stop-color="#143a66"/></radialGradient>
        <linearGradient id="oh" x1="0" x2="0" y1="0" y2="1"><stop offset="0" stop-color="#fff" stop-opacity=".75"/><stop offset="1" stop-color="#fff" stop-opacity=".15"/></linearGradient></defs>
        <circle cx="18.500" cy="18.500" r="17.800" fill="url(#o)" stroke="#314e70"/><path d="M2.500 18 A16 16 0 0 1 34.500 18 Q18 12 2.500 18Z" fill="url(#oh)"/>
        <path d="M10 10.500 Q13.500 7.500 18 9.500 L16.300 17.200 Q12 15.500 8 18Z" fill="#f2622c"/><path d="M19.500 10.200 Q24 12.500 28.500 10 L26.500 18 Q22 20 17.800 17.800Z" fill="#8dc63f"/>
        <path d="M7.600 19.500 Q11.500 16.800 16 18.700 L14.200 26.500 Q9.500 24.700 5.700 27.300Z" fill="#3aa0e8"/><path d="M17.400 19.300 Q22 21.500 26.200 19.300 L24.200 27.300 Q20 29.500 15.600 27.200Z" fill="#fdc82f"/>`)}</span>
      <span class="icq">${icon(28, 28, "0 0 28 28", svg`${petals.map((a) => svg`<ellipse cx="14" cy="5.500" rx=${a === 240 ? 3.2 : 3.4} ry=${a === 240 ? 4.8 : 5.3} fill=${a === 240 ? "#e2342b" : "#33b23c"} stroke=${a === 240 ? "#c92a20" : "#26a032"} stroke-width=".5" transform="rotate(${(a === 270 ? 285 : a) + 22} 14 14)"/>`)}<circle cx="14" cy="14" r="3.800" fill="#ffe11a"/>`)}</span>
      <span class="ut">${icon(32, 32, "0 0 32 32", svg`<circle cx="16" cy="16" r="16" fill="#6cb33f"/><path d="M16 0 A16 16 0 0 1 32 16 L24 20 L8 6 Q11 0 16 0Z" fill="#7dbd55"/><path d="M6 12 L11.500 31 M9 20 Q11.500 24.500 16 22.500 Q20 20.500 18 14.500 L16 9 M18.600 18 Q21 23.500 27.500 20" fill="none" stroke="#fff" stroke-width="4.200"/>`)}</span>
      <div class="open chrome">${icon(30, 30, "0 0 30 30", svg`<circle cx="15" cy="15" r="14.500" fill="#ffcd40"/><path d="M2.500 7.700 A14.500 14.500 0 0 0 14.500 29.500 L21 18.500 L15 15 L8.800 18.600Z" fill="#0f9d58"/><path d="M2.500 7.700 L8.700 18.500 L15 8.300 H27.600 A14.500 14.500 0 0 0 2.500 7.700Z" fill="#db4437"/><circle cx="15" cy="15" r="6.700" fill="#fff"/><circle cx="15" cy="15" r="5.300" fill="#4285f4"/>`)}</div>
      <span class="folder">${icon(32, 30, "0 0 32 30", svg`<path d="M1 3 Q1 1 3 1 H9 L11 3 H24 V26 H1Z" fill="#e9cf74" stroke="#b99a3c" stroke-width=".8"/><rect x="3" y="1.500" width="4" height="2" fill="#2fae3e"/><path d="M8 5 H18 L20 7 H29 V27 H8Z" fill="#f1dc8f" stroke="#c2a347" stroke-width=".8"/><rect x="11" y="4" width="4" height="2" fill="#d8372c"/><rect x="20" y="5.500" width="4" height="2" fill="#3a8ed8"/><path d="M1 8 H18 L20 6.500 H31 V26 Q31 28 29 28 H3 Q1 28 1 26Z" fill="#fbeeb4" stroke="#cfb35a" stroke-width=".8"/><path d="M4 29.500 V20 Q4 17 7 17 H24 Q27.500 17 27.500 20 V29.500 H22 V22.500 H10 V29.500Z" fill="#9ed4ee" stroke="#4d9fc8"/><path d="M8 12 V22 M3 17 H13" stroke="#fff" stroke-width="1.200"/>`)}</span>
      <div class="open skype">${icon(30, 30, "0 0 30 30", svg`<circle cx="9" cy="9" r="8.500" fill="#00aff0"/><circle cx="21" cy="21" r="8.500" fill="#00aff0"/><circle cx="15" cy="15" r="13" fill="#00aff0"/><text x="15" y="23.500" font-family="Open Sans" font-weight="800" font-size="24" text-anchor="middle" fill="#fff">S</text>`)}</div>
      <div class="tray">
        <fit-text class="lang" w="15">EN</fit-text>
        <span class="arrow">${icon(9, 7, "0 0 9 7", svg`<path d="M.600 6 L4.500 1.200 L8.400 6Z" fill="#fff" stroke="#4a5668" stroke-width=".5"/>`)}</span>
        <span class="win">${icon(16, 16, "0 0 16 16", svg`<path d="M.500 2.500 L15.500 .500 V15.500 L.500 13.500Z" fill="#fff" stroke="#4a5668" stroke-width=".8"/><path d="M6.500 1.500 V14.500 M.500 8 H15.500" stroke="#5f6f84" stroke-width="1.200"/>`)}</span>
        <span class="vol">${icon(14, 16, "0 0 14 16", svg`<path d="M.800 5 H3.500 L7.200 1 V15 L3.500 11 H.800Z" fill="#fff" stroke="#4a5668" stroke-width=".9"/><path d="M9.300 5.500 Q10.600 8 9.300 10.500 M11.300 4 Q13.600 8 11.300 12" fill="none" stroke="#fff" stroke-width="1.200"/>`)}</span>
        <div class="clock"><fit-text w="28">17:12</fit-text><fit-text w="55">09.05.2018</fit-text></div>
        <div class="desk"></div>
      </div>
    `;
  }
}

@customElement("app-root")
class AppRoot extends LitElement {
  static styles = css`
    :host { display: flex; flex-direction: column; width: 1920px; height: 1080px; overflow: hidden; }
  `;
  render() {
    return html`
      <browser-tabs></browser-tabs>
      <address-bar></address-bar>
      <pdf-viewer></pdf-viewer>
      <download-shelf></download-shelf>
      <task-bar></task-bar>
    `;
  }
}
